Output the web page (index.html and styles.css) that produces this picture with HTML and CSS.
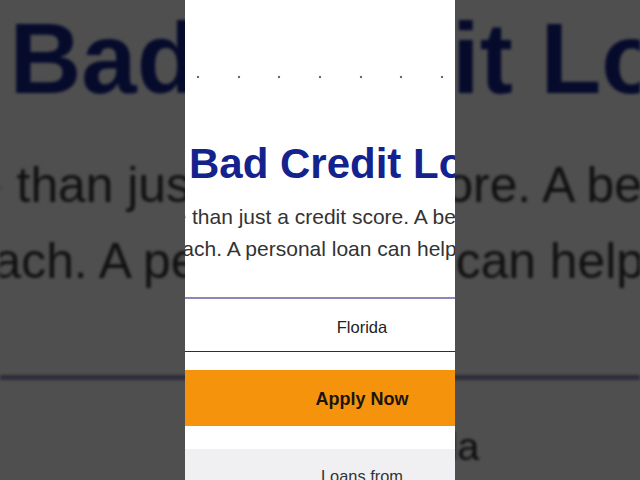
FILE: index.html
```html
<!DOCTYPE html>
<html lang="en">
<head>
<meta charset="utf-8">
<title>Bad Credit Loans</title>
<link rel="stylesheet" href="styles.css">
</head>
<body>
<div class="frame">
  <div class="panel ghost" aria-hidden="true">
    <div class="page">
      <div class="dots"><span class="dot"></span><span class="dot"></span><span class="dot"></span><span class="dot"></span><span class="dot"></span><span class="dot"></span><span class="dot"></span></div>
      <h1 class="title">Bad Credit Loans</h1>
      <p class="lede"><span class="line l1">more than just a credit score. A better future</span><span class="line l2">within reach. A personal loan can help you</span></p>
      <div class="field">Florida</div>
      <div class="apply">Apply Now</div>
      <div class="more">Loans from</div>
    </div>
  </div>
  <div class="panel front">
    <div class="page">
      <div class="dots"><span class="dot"></span><span class="dot"></span><span class="dot"></span><span class="dot"></span><span class="dot"></span><span class="dot"></span><span class="dot"></span></div>
      <h1 class="title">Bad Credit Loans</h1>
      <p class="lede"><span class="line l1">more than just a credit score. A better future</span><span class="line l2">within reach. A personal loan can help you</span></p>
      <div class="field">Florida</div>
      <div class="apply">Apply Now</div>
      <div class="more">Loans from</div>
    </div>
  </div>
</div>
</body>
</html>
```
FILE: styles.css
```css
* {
  box-sizing: border-box;
  margin: 0;
  padding: 0;
}

html,
body {
  width: 640px;
  height: 480px;
  overflow: hidden;
}

body {
  font-family: "Liberation Sans", Arial, sans-serif;
  background: #4f4f4f;
}

.frame {
  width: 640px;
  height: 480px;
  display: grid;
  grid-template-columns: 640px;
  grid-template-rows: 480px;
  justify-items: center;
  overflow: hidden;
}

.panel {
  grid-area: 1 / 1;
  width: 270px;
  height: 480px;
  background: #ffffff;
  overflow: hidden;
}

.ghost {
  z-index: 0;
  transform: scale(2.3704);
  filter: brightness(0.31) blur(0.7px);
}

.front {
  z-index: 1;
}

.page {
  width: 354px;
}

.dots {
  display: flex;
  width: 270px;
  justify-content: space-between;
  padding: 0 12px 0 12px;
  margin-top: 76px;
  height: 2px;
}

.dot {
  flex: none;
  width: 2px;
  height: 2px;
  background: #6a6a74;
  box-shadow: 0 0 1px #9a9aa4;
}

.title {
  margin-top: 62.4px;
  padding-left: 4px;
  font-size: 42px;
  line-height: 48px;
  font-weight: 700;
  color: #14228e;
  white-space: nowrap;
}

.lede {
  margin-top: 12.8px;
  font-size: 21px;
  line-height: 32px;
  color: #333333;
  white-space: nowrap;
}

.line {
  display: block;
}

.l1 {
  text-indent: -46.7px;
}

.l2 {
  text-indent: -80.9px;
}

.field {
  margin-top: 31.8px;
  height: 55.5px;
  padding-top: 4px;
  border-top: 2px solid #8c86b9;
  border-bottom: 1.5px solid #2b2563;
  font-size: 16.5px;
  line-height: 48px;
  text-align: center;
  color: #222222;
}

.apply {
  margin-top: 17.5px;
  height: 56px;
  padding-top: 2px;
  background: #f5940c;
  font-size: 18px;
  line-height: 54px;
  font-weight: 700;
  text-align: center;
  color: #1b1510;
}

.more {
  margin-top: 23px;
  height: 60px;
  padding-top: 17px;
  background: #f0f0f2;
  font-size: 16.4px;
  line-height: 20px;
  text-align: center;
  color: #333333;
}
```
